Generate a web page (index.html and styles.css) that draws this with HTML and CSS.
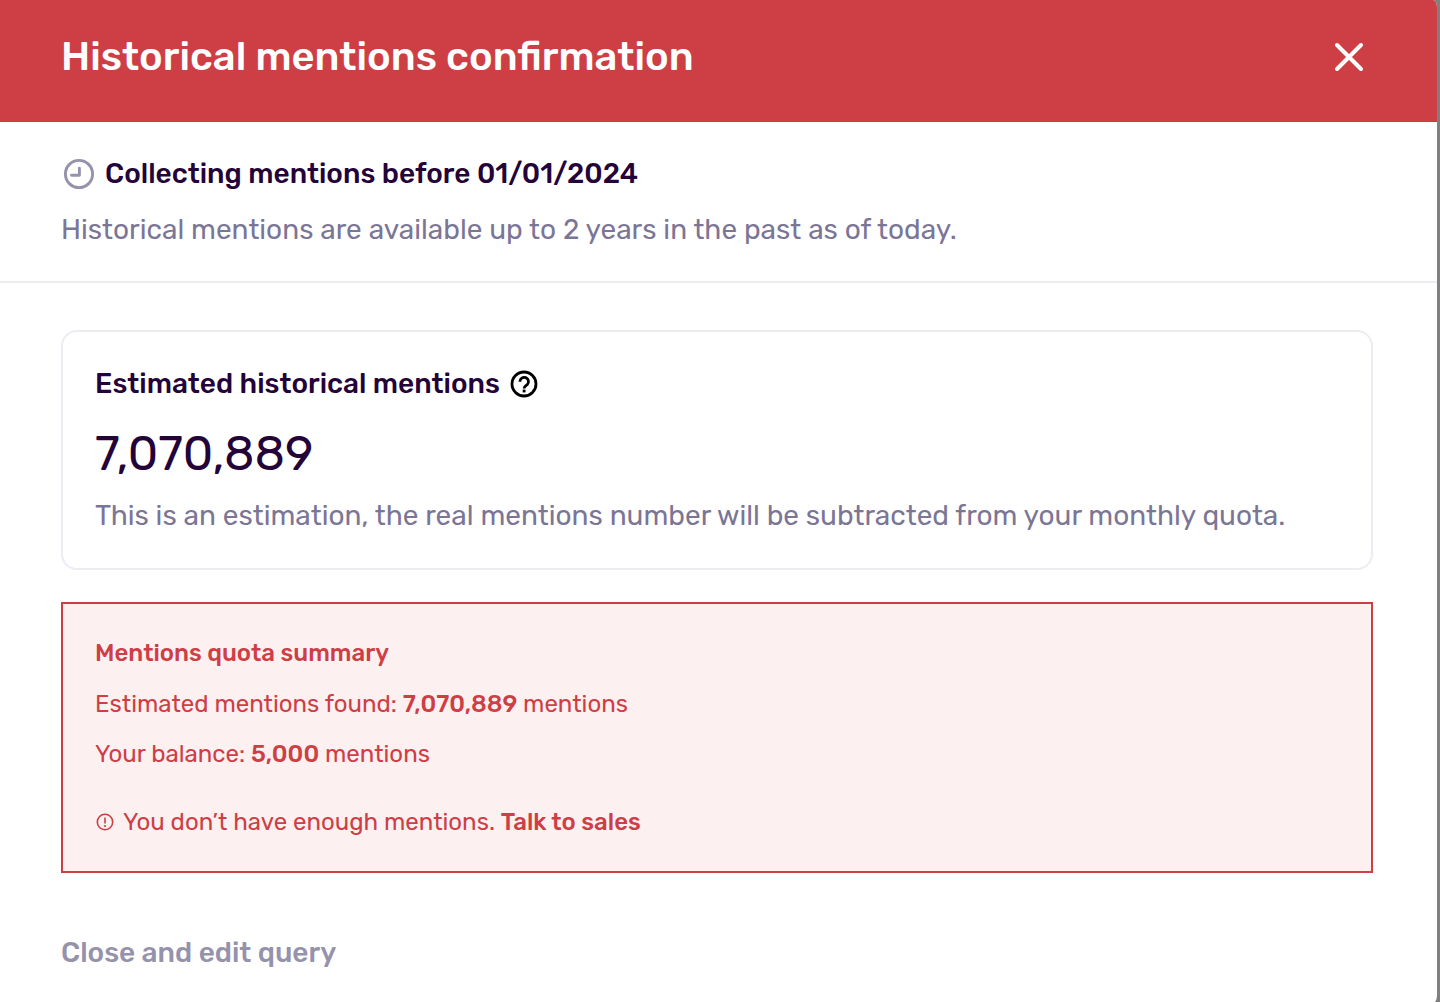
FILE: index.html
```html
<!DOCTYPE html>
<html lang="en">
<head>
<meta charset="UTF-8">
<meta name="viewport" content="width=device-width, initial-scale=1.0">
<title>Historical mentions confirmation</title>
<link rel="stylesheet" href="styles.css">
</head>
<body>

<div class="modal" role="dialog" aria-labelledby="modalTitle">
  <header class="modal-header">
    <h1 id="modalTitle">Historical mentions confirmation</h1>
    <button class="close" type="button" aria-label="Close">
      <svg width="30" height="30" viewBox="0 0 30 30" fill="none" stroke="currentColor" stroke-width="4" stroke-linecap="round">
        <path d="M3 3l24 24M27 3L3 27"/>
      </svg>
    </button>
  </header>

  <section class="intro">
    <h2>
      <svg class="clock" width="36" height="36" viewBox="0 0 36 36" fill="none" stroke="currentColor" stroke-width="2.9" stroke-linecap="round" stroke-linejoin="round">
        <circle cx="18" cy="18" r="13.6"/>
        <path d="M18.4 12.2v7.1h-7.9"/>
      </svg>
      Collecting mentions before 01/01/2024
    </h2>
    <p>Historical mentions are available up to 2 years in the past as of today.</p>
  </section>

  <main class="content">
    <section class="card">
      <h2>
        Estimated historical mentions
        <svg width="32" height="32" viewBox="0 0 32 32" fill="none" stroke="#000" stroke-width="2.8">
          <circle cx="16" cy="16" r="12"/>
          <path d="M11.9 13.7a4.3 4.3 0 1 1 7.3 3c-1.6 1.2-3.1 1.9-3.1 3.9"/>
          <path d="M16.1 21.6v2.8"/>
        </svg>
      </h2>
      <div class="total">7,070,889</div>
      <p>This is an estimation, the real mentions number will be subtracted from your monthly quota.</p>
    </section>

    <section class="quota">
      <h3>Mentions quota summary</h3>
      <p>Estimated mentions found: <strong>7,070,889</strong> mentions</p>
      <p>Your balance: <strong>5,000</strong> mentions</p>
      <div class="warning">
        <svg width="20" height="20" viewBox="0 0 20 20" fill="none" stroke="currentColor" stroke-width="1.6">
          <circle cx="10" cy="10" r="7.7"/>
          <path d="M10 5.5v6M10 13v2"/>
        </svg>
        <span>You don’t have enough mentions. <a href="#">Talk to sales</a></span>
      </div>
    </section>
  </main>

  <footer class="modal-footer">
    <button class="edit" type="button">Close and edit query</button>
  </footer>
</div>

</body>
</html>
```

FILE: styles.css
```css
* {
  box-sizing: border-box;
}

body {
  margin: 0;
  background-color: #808080;
  font-family: Rubik, Roboto, sans-serif;
  color: #240338;
}

h1, h2, h3, p {
  margin: 0;
}

h1, h2, h3, strong, a {
  font-weight: 500;
}

svg {
  flex-shrink: 0;
}

button {
  padding: 0;
  border: none;
  background: none;
  font-family: inherit;
  cursor: pointer;
}

.modal {
  min-height: 100vh;
  margin-right: 3px;
  background-color: #fff;
  border-radius: 0 4px 4px 0 / 0 8px 8px 0;
  overflow: hidden;
}

.modal-header {
  display: flex;
  justify-content: space-between;
  align-items: center;
  padding: 31px 73px 39px 61px;
  background-color: #ce3e45;
  color: #fff;
}

.modal-header h1 {
  font-size: 40px;
  line-height: 52px;
}

.close {
  display: flex;
  color: #fff;
}

.intro {
  padding: 34px 61px 33px;
  border-bottom: 2px solid #ececf2;
}

.intro h2,
.card h2 {
  display: flex;
  align-items: center;
  gap: 8px;
  font-size: 28px;
  line-height: 36px;
}

.clock {
  color: #9592ac;
}

.intro p,
.card p {
  font-size: 28px;
  line-height: 36px;
  color: #7b7596;
}

.intro p {
  margin-top: 20px;
}

.content {
  display: flex;
  flex-direction: column;
  gap: 32px;
  padding: 47px 64px 0 61px;
}

.card {
  padding: 34px 32px;
  border: 2px solid #ececf2;
  border-radius: 16px;
}

.total {
  margin: 20px 0 12px;
  font-size: 48px;
  line-height: 64px;
}

.quota {
  padding: 32px;
  border: 2px solid #ce3e45;
  background-color: #fcf0f0;
  color: #ce3e45;
  font-size: 24px;
  line-height: 34px;
}

.quota h3 {
  font-size: 24px;
}

.quota p {
  margin-top: 16px;
}

.quota h3 + p {
  margin-top: 17px;
}

.warning {
  display: flex;
  align-items: center;
  gap: 8px;
  margin-top: 34px;
}

.quota a {
  color: inherit;
  text-decoration: none;
}

.modal-footer {
  padding: 62px 61px 32px;
}

.edit {
  font-size: 28px;
  font-weight: 500;
  line-height: 36px;
  color: #9592ac;
}
```
